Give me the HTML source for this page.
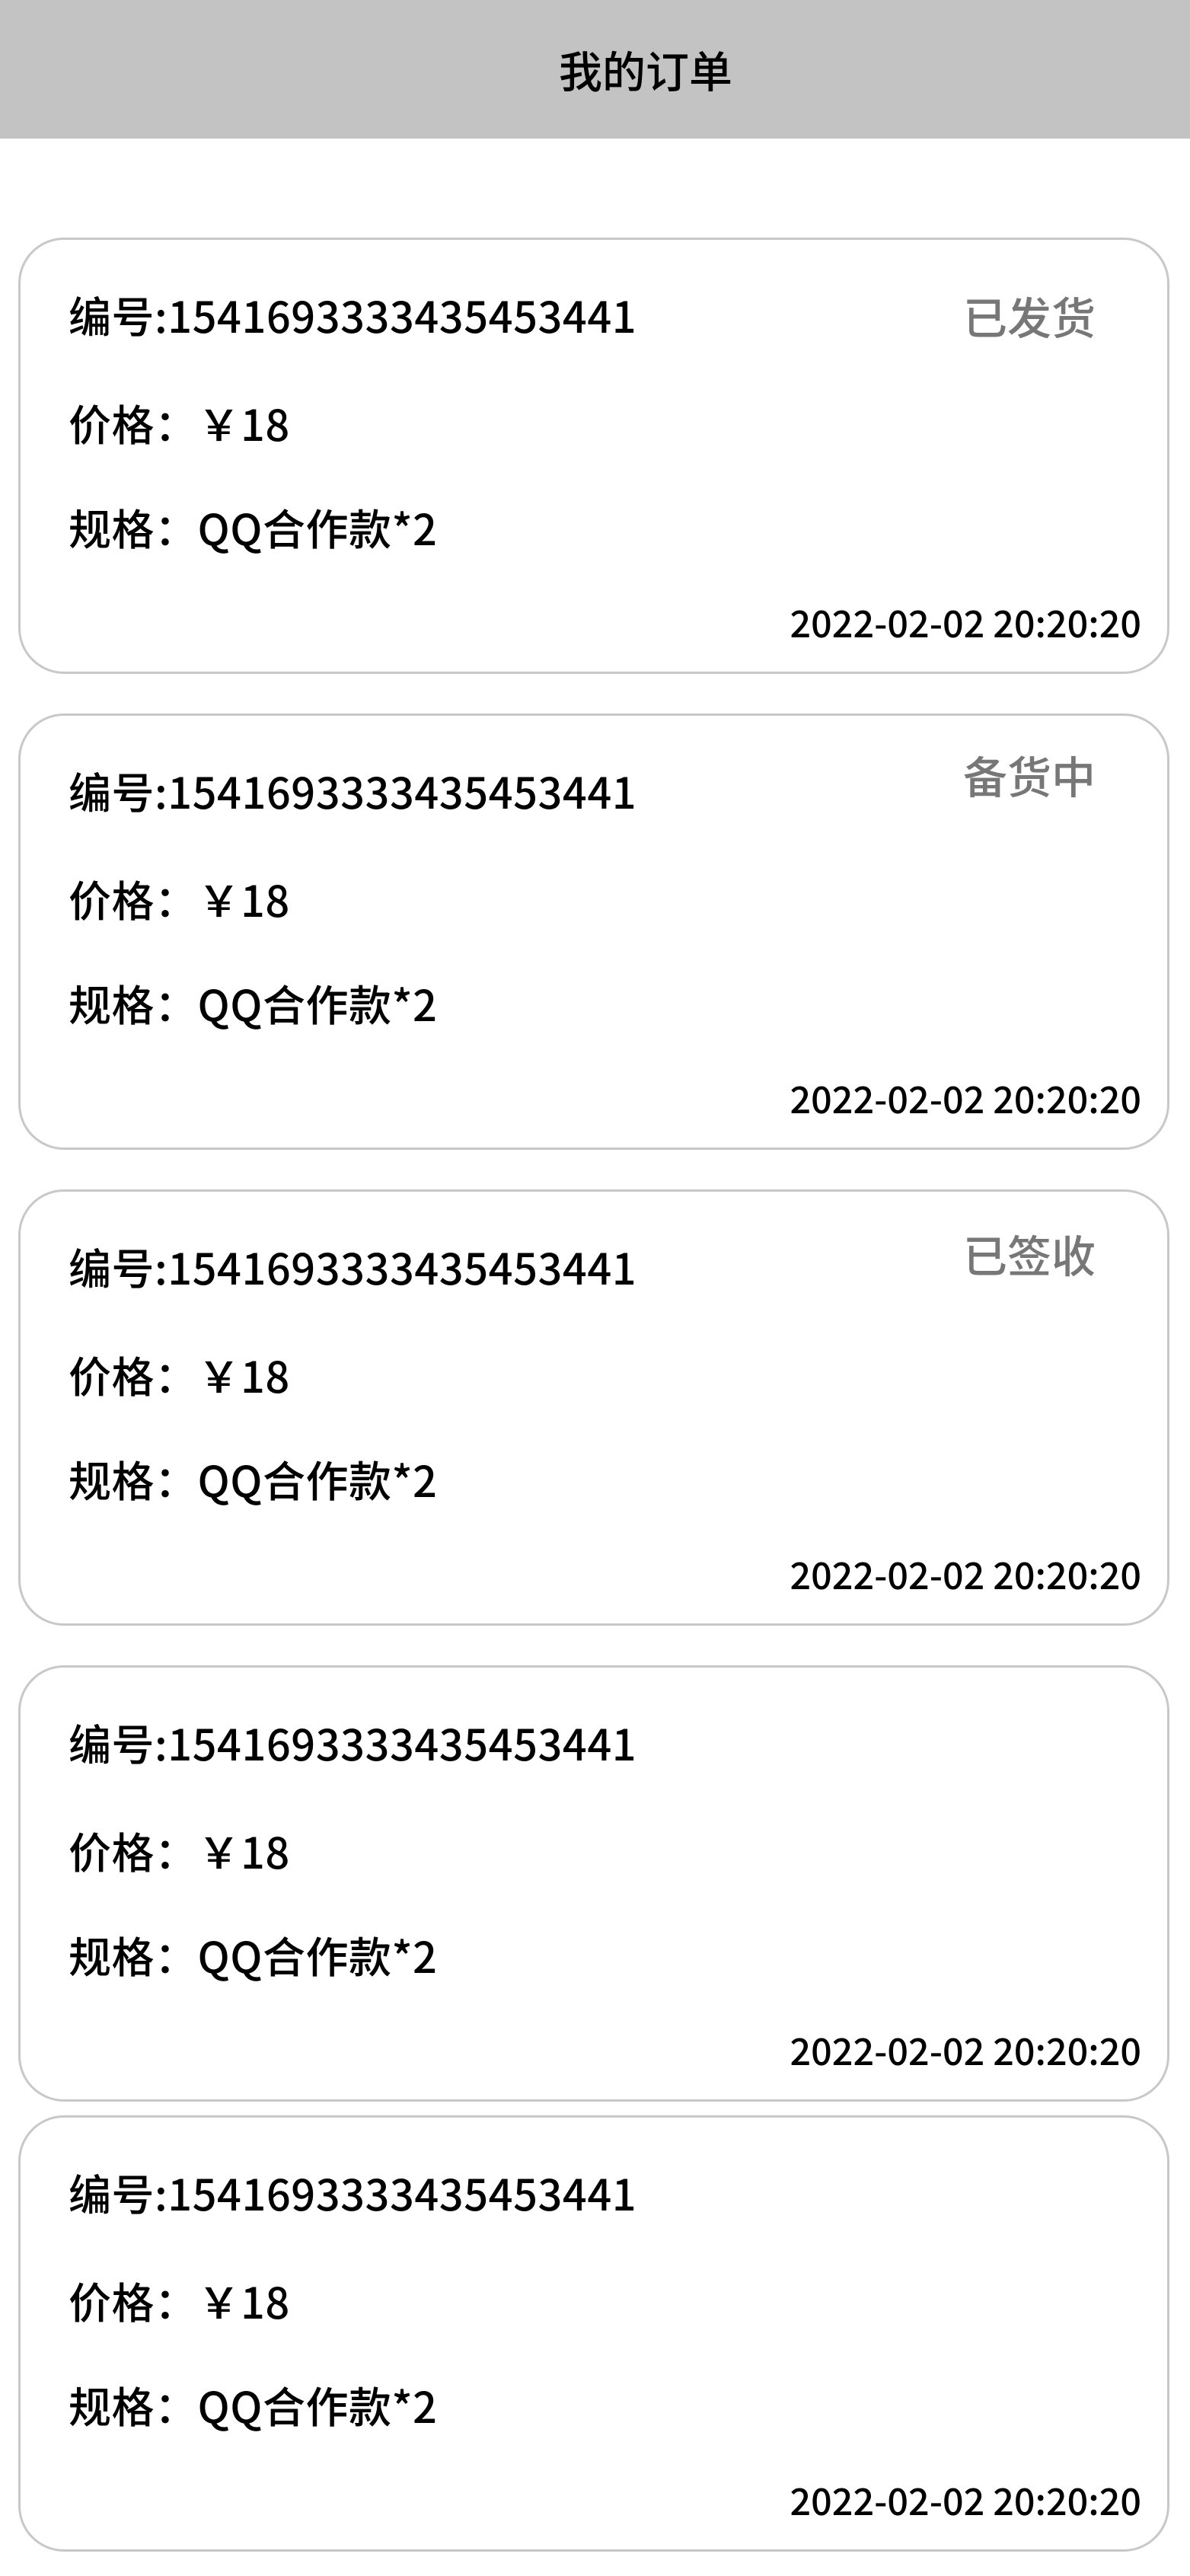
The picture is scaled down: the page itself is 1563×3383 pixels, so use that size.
<!DOCTYPE html>
<html><head><meta charset="utf-8"><style>
*{margin:0;padding:0;box-sizing:border-box}
body{width:1563px;height:3383px;background:#fff;position:relative;overflow:hidden;font-family:"Liberation Sans","Noto Sans CJK SC",sans-serif;color:#000}
.hd{position:absolute;left:0;top:0;width:1563px;height:182px;background:#c3c3c3}
.hd span{position:absolute;left:734px;top:0;line-height:182px;font-size:57px;font-weight:500;font-family:"Noto Sans CJK SC",sans-serif;white-space:nowrap}
.card{position:absolute;left:24px;width:1512px;height:573px;border:3px solid #c8c8c8;border-radius:60px}
.t{position:absolute;left:63px;height:70px;line-height:70px;font-size:56px;font-weight:500;letter-spacing:0.5px;font-family:"Noto Sans CJK SC",sans-serif;white-space:nowrap}
.s{position:absolute;right:94px;height:70px;line-height:70px;font-size:58px;font-weight:500;color:#777;font-family:"Noto Sans CJK SC",sans-serif}
.d{position:absolute;right:34px;top:466px;height:70px;line-height:70px;font-size:48.5px;font-weight:500;font-family:"Noto Sans CJK SC",sans-serif;white-space:nowrap}
</style></head><body>
<div class="hd"><span>我的订单</span></div>

<div class="card" style="top:312px">
<div class="t" style="top:64px">编号:1541693333435453441</div>
<div class="s" style="top:64px">已发货</div>
<div class="t" style="top:206px">价格：￥18</div>
<div class="t" style="top:343px">规格：QQ合作款*2</div>
<div class="d">2022-02-02 20:20:20</div>
</div>

<div class="card" style="top:937px">
<div class="t" style="top:64px">编号:1541693333435453441</div>
<div class="s" style="top:42px">备货中</div>
<div class="t" style="top:206px">价格：￥18</div>
<div class="t" style="top:343px">规格：QQ合作款*2</div>
<div class="d">2022-02-02 20:20:20</div>
</div>

<div class="card" style="top:1562px">
<div class="t" style="top:64px">编号:1541693333435453441</div>
<div class="s" style="top:46px">已签收</div>
<div class="t" style="top:206px">价格：￥18</div>
<div class="t" style="top:343px">规格：QQ合作款*2</div>
<div class="d">2022-02-02 20:20:20</div>
</div>

<div class="card" style="top:2187px">
<div class="t" style="top:64px">编号:1541693333435453441</div>
<div class="t" style="top:206px">价格：￥18</div>
<div class="t" style="top:343px">规格：QQ合作款*2</div>
<div class="d">2022-02-02 20:20:20</div>
</div>

<div class="card" style="top:2778px">
<div class="t" style="top:64px">编号:1541693333435453441</div>
<div class="t" style="top:206px">价格：￥18</div>
<div class="t" style="top:343px">规格：QQ合作款*2</div>
<div class="d">2022-02-02 20:20:20</div>
</div>
</body></html>
